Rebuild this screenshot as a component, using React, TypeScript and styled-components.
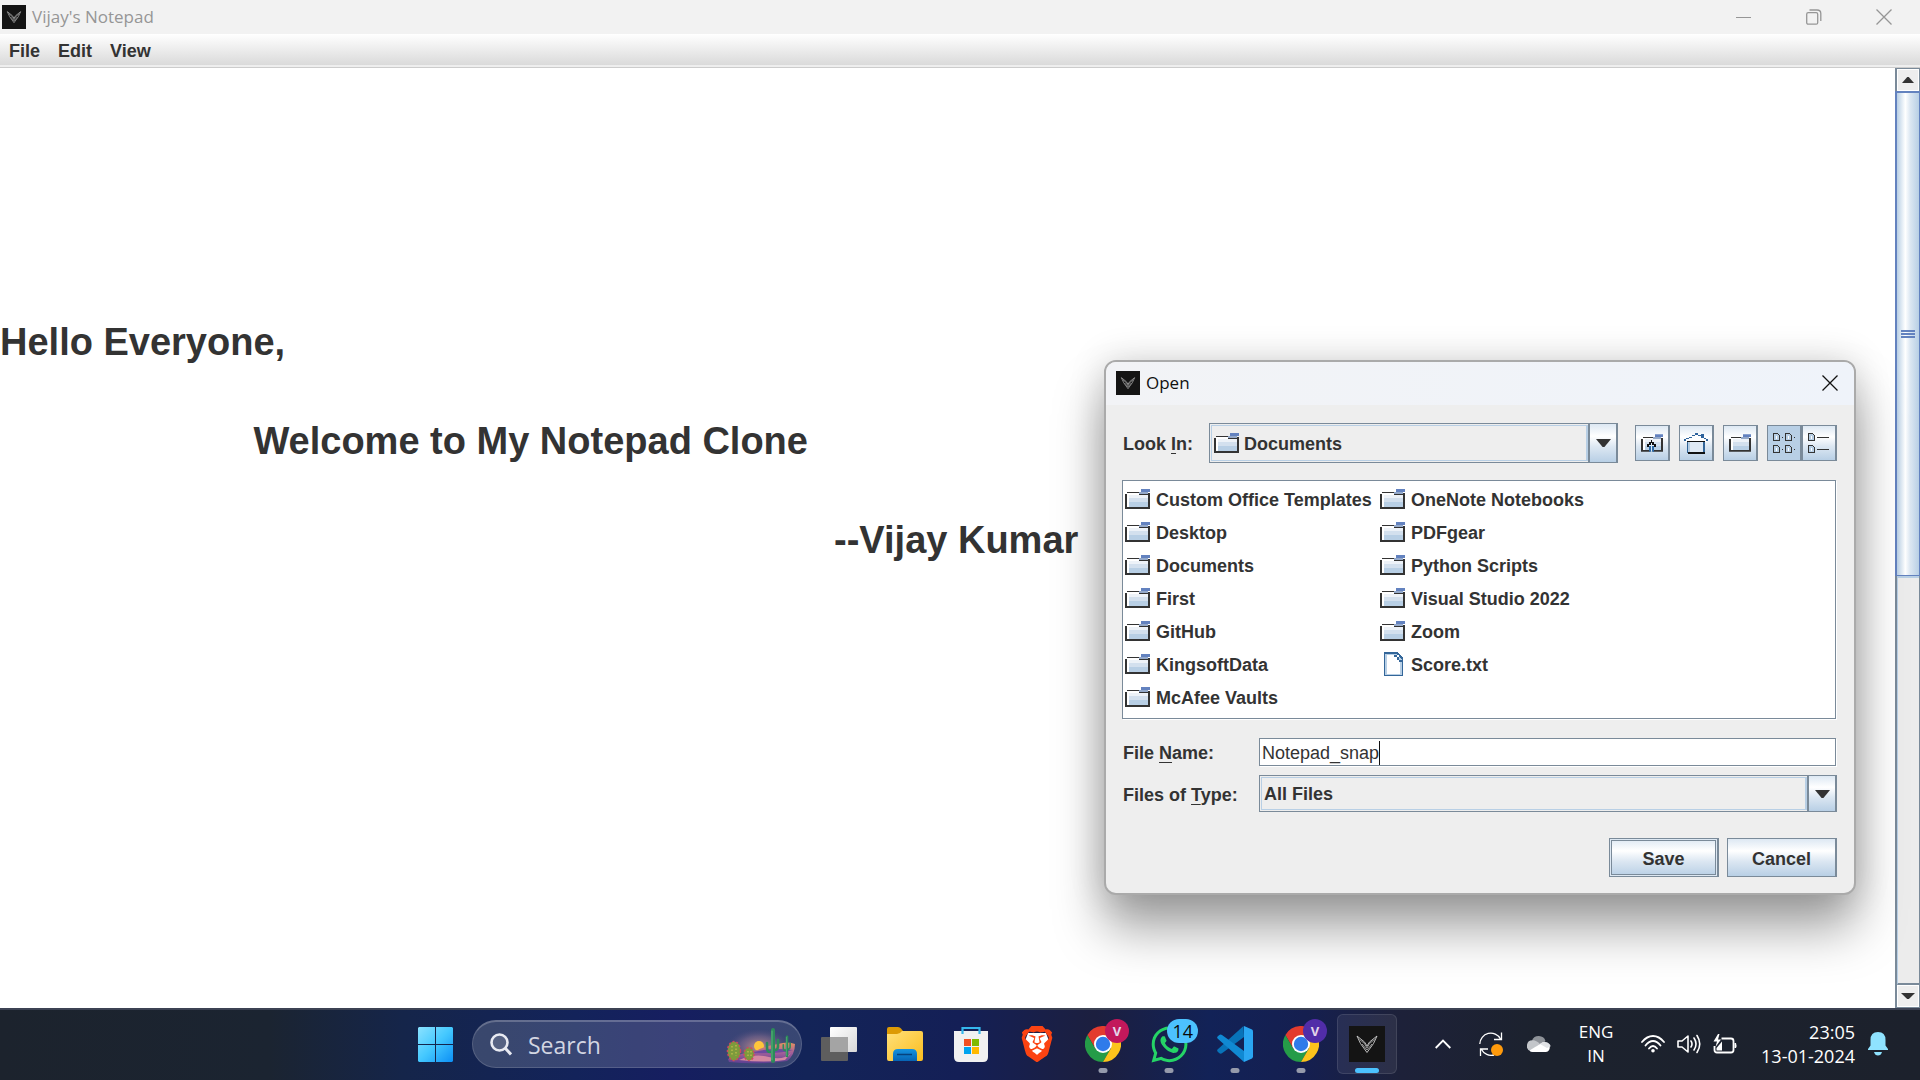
import React from "react";
import styled, { createGlobalStyle, css } from "styled-components";
import { FaWhatsapp } from "react-icons/fa";
import { SiBrave } from "react-icons/si";

const GlobalStyle = createGlobalStyle`
  *, *::before, *::after { box-sizing: border-box; }
  html, body, #root { height: 100%; }
  body {
    margin: 0;
    overflow: hidden;
    color: #333;
    font-family: "Liberation Sans", Arial, sans-serif;
    font-size: 18px;
  }
  button, input, select, textarea { font: inherit; color: inherit; }
  button { padding: 0; border: 0; background: none; }
  svg { display: block; flex: none; }
`;

const UI_FONT = `"Open Sans", "Noto Sans", sans-serif`;
const STEEL = "#7a8a99";
const SKY = "#b8cfe5";

const metal = css`
  background: linear-gradient(#dde8f3 0%, #ffffff 32%, #dce7f2 60%, ${SKY} 100%);
`;

/* ---------- page ---------- */

const Screen = styled.div`
  display: flex;
  flex-direction: column;
  height: 100vh;
  position: relative;
  background: #fff;
`;

const TitleBar = styled.header<{ $dialog?: boolean }>`
  display: flex;
  align-items: center;
  gap: 6px;
  flex: none;
  height: ${(p) => (p.$dialog ? 43 : 34)}px;
  padding: ${(p) => (p.$dialog ? "0 3px 2px 10px" : "0 1px 0 2px")};
  background: ${(p) => (p.$dialog ? "linear-gradient(90deg, #f2f3f6, #eff3fa)" : "#f2f2f2")};
  color: ${(p) => (p.$dialog ? "#111" : "#969696")};
`;

const TitleText = styled.h1`
  flex: 1;
  margin: 0;
  font: 400 17px/24px ${UI_FONT};
`;

const CaptionButtons = styled.div`
  display: flex;
`;

const CaptionButton = styled.button<{ $width: number }>`
  display: grid;
  place-items: center;
  width: ${(p) => p.$width}px;
  height: 32px;
`;

const MenuBar = styled.nav`
  display: flex;
  align-items: center;
  gap: 18px;
  flex: none;
  height: 34px;
  padding: 1px 9px 0;
  border-bottom: 1px solid #ccc;
  background: linear-gradient(#fff, #dadada 31px, #eee 31px);
`;

const MenuButton = styled.button`
  font-weight: 700;
`;

const Workspace = styled.main`
  display: flex;
  flex: 1;
  min-height: 0;
`;

const Editor = styled.textarea`
  flex: 1;
  min-width: 0;
  padding: 225px 0 0;
  border: 0;
  outline: 0;
  resize: none;
  overflow: hidden;
  white-space: pre;
  font-size: 38px;
  font-weight: 700;
  line-height: 99px;
`;

/* ---------- scroll bar ---------- */

const ScrollBar = styled.div`
  display: flex;
  flex-direction: column;
  width: 25px;
  border: solid ${STEEL};
  border-width: 1px 1px 1px 2px;
  background: #ececec;
`;

const ScrollArrow = styled.button`
  display: grid;
  place-items: center;
  height: 22px;
  border: 1px solid #fff;
  background: #eee;
`;

const ScrollThumb = styled.div`
  display: grid;
  place-items: center;
  flex: 485;
  margin-left: -2px;
  margin-right: -1px;
  border: 2px solid #6382bf;
  border-width: 2px 1px 1px 2px;
  background: linear-gradient(90deg, ${SKY}, #fff 38%, #dce7f2 60%, ${SKY});
`;

const ScrollTrack = styled.div`
  flex: 408;
  border-top: 2px solid ${SKY};
  border-bottom: 2px solid ${STEEL};
  border-left: 1px solid ${SKY};
`;

/* ---------- dialog ---------- */

const Dialog = styled.section`
  position: absolute;
  top: 360px;
  right: 64px;
  width: 752px;
  border: 2px solid #aaa;
  border-radius: 12px;
  overflow: hidden;
  background: #eee;
  background-clip: padding-box;
  box-shadow: 0 34px 50px rgba(0, 0, 0, 0.36), 0 0 36px rgba(0, 0, 0, 0.16);
`;

const DialogBody = styled.form`
  display: flex;
  flex-direction: column;
  padding: 18px 17px 16px 16px;
  font-weight: 700;
`;

const LookRow = styled.div`
  display: flex;
  align-items: center;
  margin-bottom: 17px;
`;

const Label = styled.label<{ $width: number }>`
  flex: none;
  width: ${(p) => p.$width}px;
  padding: 2px 0 0 1px;
  line-height: 24px;
`;

const Mnemonic = styled.span`
  text-decoration: underline;
  text-decoration-thickness: 1px;
  text-underline-offset: 3px;
`;

const ComboFrame = styled.div<{ $height: number }>`
  display: flex;
  flex: 1;
  height: ${(p) => p.$height}px;
  border: 1px solid ${STEEL};
`;

const ComboInner = styled.div`
  display: flex;
  align-items: center;
  flex: 1;
  gap: 5px;
  margin: 1px 0 1px 1px;
  padding-left: 2px;
  border: 1px solid ${SKY};
  border-right-width: 2px;
`;

const ComboSelect = styled.select`
  appearance: none;
  flex: 1;
  height: 100%;
  padding: 1px 0 0;
  border: 0;
  outline: 0;
  background: transparent;
  font-weight: 700;
`;

const ComboArrow = styled.span`
  display: grid;
  place-items: center;
  width: 29px;
  border: solid ${STEEL};
  border-width: 0 1px 0 2px;
  ${metal}
`;

const ToolGroup = styled.div`
  display: flex;
  gap: 9px;
  padding-left: 17px;
`;

const ViewToggle = styled.div`
  display: flex;
`;

const ToolButton = styled.button<{ $pressed?: boolean }>`
  display: grid;
  place-items: center;
  width: 35px;
  height: 36px;
  border: 1px solid ${STEEL};
  border-right-width: 2px;
  ${metal}
  ${(p) => p.$pressed && css`background: ${SKY};`}
`;

const FileList = styled.ul`
  display: grid;
  grid-auto-flow: column;
  grid-template-rows: repeat(7, 33px);
  grid-auto-columns: 255px;
  align-content: start;
  height: 239px;
  margin: 0 1px 19px 0;
  padding: 3px 2px;
  list-style: none;
  border: 1px solid ${STEEL};
  background: #fff;
  box-shadow: 1px 1px 0 #fff;
`;

const FileItem = styled.li`
  display: flex;
  align-items: center;
  gap: 6px;
  white-space: nowrap;

  svg { margin-bottom: 3px; }
`;

const FieldRow = styled.div<{ $after: number }>`
  display: flex;
  align-items: center;
  margin-bottom: ${(p) => p.$after}px;
`;

const TextField = styled.div`
  display: flex;
  flex: 1;
  height: 28px;
  margin-right: 1px;
  padding: 2px 2px 0;
  border: 1px solid ${STEEL};
  background: #fff;
  box-shadow: 1px 1px 0 #fff;
`;

const NameInput = styled.input`
  field-sizing: content;
  padding: 0;
  border: 0;
  outline: 0;
  background: transparent;
  font-weight: 400;
`;

const Caret = styled.span`
  width: 1px;
  background: #111;
`;

const Actions = styled.div`
  display: flex;
  justify-content: flex-end;
  gap: 8px;
`;

const PushButton = styled.button<{ $primary?: boolean }>`
  width: 110px;
  height: 39px;
  padding-top: 3px;
  border: 1px solid ${STEEL};
  border-right-width: 2px;
  font-weight: 700;
  ${metal}
  ${(p) =>
    p.$primary &&
    css`
      box-shadow: inset 0 0 0 1px #dde8f3, inset 0 0 0 2px ${STEEL};
    `}
`;

/* ---------- taskbar ---------- */

const TaskBar = styled.footer`
  display: flex;
  align-items: center;
  flex: none;
  height: 72px;
  padding-bottom: 2px;
  border-top: 2px solid #3c4253;
  background: linear-gradient(
    90deg,
    #1c232d 0%,
    #1b2431 14%,
    #15254a 21%,
    #13235a 30%,
    #161e60 35%,
    #132458 42%,
    #141f56 50%,
    #1c1f3f 57%,
    #122257 63%,
    #151f50 68%,
    #1d2139 73%,
    #1c222e 80%,
    #1c212c 100%
  );
  background-origin: border-box;
  color: #fff;
  font: 400 17px/24px ${UI_FONT};
`;

const Apps = styled.div`
  display: flex;
  align-items: center;
  gap: 6px;
  margin-left: auto;
`;

const AppButton = styled.button<{ $active?: boolean }>`
  display: grid;
  place-items: center;
  position: relative;
  width: 60px;
  height: 60px;
  border-radius: 6px;
  ${(p) =>
    p.$active &&
    css`
      border: 1px solid rgba(255, 255, 255, 0.1);
      background: rgba(255, 255, 255, 0.07);
    `}
`;

const RunMark = styled.span<{ $active?: boolean }>`
  position: absolute;
  bottom: ${(p) => (p.$active ? 0 : 1)}px;
  left: 50%;
  width: ${(p) => (p.$active ? 24 : 9)}px;
  height: 5px;
  border-radius: 3px;
  transform: translateX(-50%);
  background: ${(p) => (p.$active ? "#4cc2ff" : "#959aab")};
`;

const Badge = styled.span<{ $tone: string; $wide?: boolean }>`
  position: absolute;
  top: 5px;
  right: ${(p) => (p.$wide ? 1 : 4)}px;
  min-width: 24px;
  padding: 0 ${(p) => (p.$wide ? 5 : 0)}px;
  border-radius: 12px;
  background: ${(p) => p.$tone};
  color: ${(p) => (p.$wide ? "#0a0a0a" : "#e4d6ea")};
  font: ${(p) => (p.$wide ? "400 18px" : "700 13px")} / 24px ${UI_FONT};
  text-align: center;
`;

const SearchBox = styled.label`
  display: flex;
  align-items: center;
  gap: 16px;
  width: 330px;
  height: 48px;
  margin: 0 1px;
  padding: 0 4px 0 17px;
  border: 1px solid rgba(255, 255, 255, 0.14);
  border-top: 2px solid rgba(255, 255, 255, 0.22);
  border-radius: 24px;
  background: rgba(255, 255, 255, 0.16);
`;

const SearchInput = styled.input`
  flex: 1;
  min-width: 0;
  padding: 0;
  border: 0;
  outline: 0;
  background: transparent;
  font-size: 23px;
  &::placeholder { color: #d3d6e2; opacity: 1; }
`;

const Tray = styled.div`
  display: flex;
  align-items: center;
  height: 60px;
  padding: 0 19px 0 22px;
`;

const TrayButton = styled.button<{ $width?: number }>`
  display: grid;
  place-items: center;
  width: ${(p) => p.$width ?? 48}px;
  height: 60px;
`;

const Status = styled.button`
  display: flex;
  align-items: center;
  gap: 12px;
  height: 60px;
  padding: 0 12px;
`;

const Clock = styled.button`
  min-width: 106px;
  font-size: 18px;
  text-align: right;
`;

/* ---------- drawings ---------- */

const AppLogo = ({ size }: { size: number }) => (
  <svg width={size} height={size} viewBox="0 0 36 36">
    <rect width="36" height="36" fill="#141414" />
    <g fill="none" stroke="#d0d0d0" strokeWidth=".9" strokeLinejoin="round">
      <path d="M8 10l7.500 6L18 20l2.500-4L28 10l-3.500 7.500L18 26.500l-6.500-9z" />
      <path d="M10.500 13.500l5 4L18 22l2.500-4.500 5-4M13 18l5 6 5-6" stroke="#a8a8a8" />
    </g>
  </svg>
);

const Folder = ({ arrow = false }: { arrow?: boolean }) => (
  <svg width="25" height="20" viewBox="0 0 25 20" shapeRendering="crispEdges">
    <path d="M2 4h21v14H2z" fill="#fff" />
    <path d="M4 6h19v3H4z" fill="#edf2f8" />
    <path d="M4 9h19v4H4z" fill="#d3e0ee" />
    <path d="M4 13h19v5H4z" fill={SKY} />
    <path d="M0 5h2v13h23v2H0zM2 3h12v1H2zM14 5h9V4h2v16h-2V6h-9z" fill="#333" />
    <path d="M14 3h9v2h-9z" fill="#93a8c9" />
    <path d="M16 0h9v3h-9z" fill="#6382bf" />
    {arrow && (
      <>
        <path d="M7 13l5-5 5 5v1h-3v6h-4v-6H7z" fill="#dcebf8" />
        <path d="M9 13h2v7H9zM13 13h2v7h-2z" fill="#2f6aa5" />
        <path d="M11 7h2v2h2v2h2v3h-2v-2h-2v-2h-2v2H9v2H7v-3h2V9h2z" fill="#111" />
      </>
    )}
  </svg>
);

const SmallFolder = ({ arrow = false }: { arrow?: boolean }) => (
  <svg width="22" height="18" viewBox="0 0 25 20">
    <Folder arrow={arrow} />
  </svg>
);

const Sheet = () => (
  <svg width="25" height="24" viewBox="0 0 25 24" shapeRendering="crispEdges">
    <path d="M4 0h14l5 6v18H4z" fill="#336699" />
    <path d="M5 2h12l5 6v15H5z" fill={SKY} />
    <path d="M7 3h8l5 7v12H7z" fill="#fff" />
    <path d="M14 3h3v2h2v3h3v2h-3V8h-2V5h-3z" fill="#336699" />
    <path d="M17 3h2v2h-2z" fill="#fff" />
  </svg>
);

const Home = () => (
  <svg width="24" height="21" viewBox="0 0 24 21" shapeRendering="crispEdges">
    <path d="M12 1h1l10 6v2H1V7z" fill="#fff" />
    <path d="M11 0h3v2h-3zM8 2h3v1H8zM14 2h3v1h-3zM17 1h3v4h-3zM5 4h3v1H5zM2 5h3v1H2zM20 5h2v1h-2zM0 6h2v2H0zM22 6h2v2h-2z" fill="#2f639c" />
    <path d="M3 8h18v12H3z" fill="#336699" />
    <path d="M4 9h2v11H4z" fill={SKY} />
    <path d="M6 9h13v10H6z" fill="#dfe9f4" />
    <path d="M3 8h18v1H3zM4 19h17v2H4z" fill="#111" />
  </svg>
);

const Cell = ({ x, y }: { x: number; y: number }) => (
  <g>
    <path d={`M${x + 0.5} ${y + 0.5}h4l2 2v5h-6z`} fill="#b8cfe5" stroke="#333" />
    <path d={`M${x + 3} ${y + 3}h1v3h-1z`} fill="#fff" />
  </g>
);

const ListIcon = () => (
  <svg width="23" height="20" viewBox="0 0 23 20" shapeRendering="crispEdges">
    <Cell x={0} y={0} />
    <Cell x={12} y={0} />
    <Cell x={0} y={12} />
    <Cell x={12} y={12} />
    <path d="M9 4h1v1H9zM21 4h1v1h-1zM9 16h1v1H9zM21 16h1v1h-1z" fill="#333" />
  </svg>
);

const DetailsIcon = () => (
  <svg width="22" height="20" viewBox="0 0 22 20" shapeRendering="crispEdges">
    <Cell x={0} y={0} />
    <Cell x={0} y={12} />
    <path d="M9 4h12v1H9zM9 16h12v1H9z" fill="#333" />
  </svg>
);

const Triangle = ({ up = false, width = 15 }: { up?: boolean; width?: number }) => (
  <svg width={width} height={up || width < 15 ? 6 : 8} viewBox="0 0 16 8" preserveAspectRatio="none">
    <path d={up ? "M0 8h16L9 0H7z" : "M0 0h16L9 8H7z"} fill="#333" />
  </svg>
);

const Grip = () => (
  <svg width="14" height="8" viewBox="0 0 14 8" shapeRendering="crispEdges">
    <path d="M0 0h14v2H0zM0 3h14v2H0zM0 6h14v2H0z" fill="#6382bf" />
  </svg>
);

const Cross = () => (
  <svg width="16" height="16" viewBox="0 0 16 16" fill="none" stroke="currentColor" strokeWidth="1.300">
    <path d="M.5.5l15 15M15.500.5l-15 15" />
  </svg>
);

const WindowsLogo = () => (
  <svg width="35" height="35" viewBox="0 0 35 35">
    <defs>
      <linearGradient id="win" x1="0" y1="0" x2="1" y2="1" gradientUnits="objectBoundingBox">
        <stop offset="0" stopColor="#8be2ff" />
        <stop offset=".5" stopColor="#44c8ff" />
        <stop offset="1" stopColor="#0c8ff5" />
      </linearGradient>
    </defs>
    <path d="M1 0h16v17H0V1zM18 0h16l1 1v16H18zM0 18h17v17H1l-1-1zM18 18h17v16l-1 1H18z" fill="url(#win)" />
  </svg>
);

const Magnifier = () => (
  <svg width="22" height="23" viewBox="0 0 22 23" fill="none" stroke="#e8eaf2" strokeWidth="2.600">
    <circle cx="9.500" cy="9.500" r="8" fill="rgba(255,255,255,.15)" />
    <path d="M15.500 15.500l5.500 6" strokeWidth="3" />
  </svg>
);

const Cactus = ({ x, y, s }: { x: number; y: number; s: number }) => (
  <g transform={`translate(${x} ${y}) scale(${s})`} fill="none" stroke="#2c8a5a" strokeLinecap="round" strokeLinejoin="round">
    <path d="M0 0v-31" strokeWidth="4" />
    <path d="M0-9h-3q-3 0-3-4v-5M0-11h2q3 0 3-4v-6" strokeWidth="2.600" />
    <path d="M-1-1v-29" stroke="#5cb27c" strokeWidth="1" />
  </g>
);

const Desert = () => (
  <svg width="72" height="38" viewBox="0 0 72 38">
    <defs>
      <radialGradient id="dusk">
        <stop offset="0" stopColor="#d79a8c" stopOpacity=".9" />
        <stop offset=".6" stopColor="#8d6f8f" stopOpacity=".5" />
        <stop offset="1" stopColor="#5a5080" stopOpacity="0" />
      </radialGradient>
      <linearGradient id="sand" x1="0" y1="0" x2="0" y2="1">
        <stop offset="0" stopColor="#e8935f" />
        <stop offset=".5" stopColor="#a35f9a" />
        <stop offset="1" stopColor="#5c3f92" />
      </linearGradient>
    </defs>
    <ellipse cx="34" cy="21" rx="32" ry="18" fill="url(#dusk)" />
    <circle cx="34" cy="20" r="5" fill="#ffc53a" />
    <path d="M3 33q12-6 26-7 10-6 24-8 10-3 17 0 0 11-8 17-30 4-58 1z" fill="url(#sand)" />
    <path d="M14 34q16-7 30-3t22-4l-6 7q-20 3-46 0z" fill="#d488a2" />
    <path d="M26 27q18-6 42-3-14 4-42 3z" fill="#6c4aa0" />
    <ellipse cx="9" cy="25" rx="6.500" ry="9.500" fill="#7d9a3c" stroke="#cf4a5c" strokeDasharray="2 2" strokeWidth="1.500" />
    <ellipse cx="24" cy="28" rx="5" ry="6.500" fill="#7d9a3c" stroke="#cf4a5c" strokeDasharray="2 2" strokeWidth="1.500" />
    <path d="M7 20v10M11 19v11M23 25v7M26 25v6" stroke="#c8c04c" strokeDasharray="1.500 2" strokeWidth="1.200" />
    <Cactus x={48} y={35} s={1} />
    <Cactus x={62} y={30} s={0.62} />
  </svg>
);

const TaskView = () => (
  <svg width="36" height="34" viewBox="0 0 36 34">
    <defs>
      <linearGradient id="tv" x1="0" y1="0" x2="1" y2="1">
        <stop offset="0" stopColor="#fff" />
        <stop offset="1" stopColor="#d8d8d8" />
      </linearGradient>
    </defs>
    <rect y="10" width="27" height="24" rx="1" fill="#5e5e5e" />
    <rect x="9" width="27" height="25" rx="1" fill="url(#tv)" />
    <path d="M9 10h18v15H9z" fill="#a4a4a4" />
  </svg>
);

const Explorer = () => (
  <svg width="36" height="34" viewBox="0 0 36 34">
    <defs>
      <linearGradient id="fe" x1="0" y1="0" x2="1" y2="1">
        <stop offset="0" stopColor="#ffe07a" />
        <stop offset="1" stopColor="#fbbd1e" />
      </linearGradient>
      <linearGradient id="fb" x1="0" y1="0" x2="0" y2="1">
        <stop offset="0" stopColor="#1593e0" />
        <stop offset="1" stopColor="#0764b4" />
      </linearGradient>
    </defs>
    <path d="M0 2q0-2 2-2h9q2 0 3 1.500L16 4v6H0z" fill="#dc9a05" />
    <path d="M0 7h10q3 0 5-3h19q2 0 2 2v26q0 2-2 2H2q-2 0-2-2z" fill="url(#fe)" />
    <path d="M6 34v-7q0-5 5-5h14q5 0 5 5v7z" fill="url(#fb)" />
    <path d="M10 27.500h15" stroke="#06427d" strokeWidth="1.500" />
  </svg>
);

const Store = () => (
  <svg width="36" height="36" viewBox="0 0 36 36">
    <path d="M9.500 7V2h17v5" fill="none" stroke="#35b7ec" strokeWidth="2.200" />
    <path d="M1 5h34v26q0 5-5 5H6q-5 0-5-5z" fill="#f1f1f1" />
    <path d="M9.500 5v3M26.500 5v3" stroke="#35b7ec" strokeWidth="2.200" />
    <path d="M11 13h7v7h-7z" fill="#f25022" />
    <path d="M19 13h7v7h-7z" fill="#7fba00" />
    <path d="M11 21h7v7h-7z" fill="#00a4ef" />
    <path d="M19 21h7v7h-7z" fill="#ffb900" />
  </svg>
);

const Brave = () => (
  <svg width="36" height="36" viewBox="0 0 36 36">
    <path d="M9 7h18l3 8-5 11-7 5-7-5-5-11z" fill="#fff" />
    <SiBrave size={36} color="#fb4312" />
  </svg>
);

const Chrome = () => (
  <svg width="36" height="36" viewBox="0 0 36 36">
    <path d="M2.400 9A18 18 0 0 1 33.600 9H18l-7.800 13.500z" fill="#e33b2e" />
    <path d="M2.400 9l7.800 13.500L18 26l7.800-3.500L18 36A18 18 0 0 1 2.400 9z" fill="#259c48" />
    <path d="M33.600 9A18 18 0 0 1 18 36l7.800-13.500L18 9z" fill="#fcc31c" />
    <circle cx="18" cy="18" r="9" fill="#fff" />
    <circle cx="18" cy="18" r="7.200" fill="#2f7bea" />
  </svg>
);

const VsCode = () => (
  <svg width="36" height="36" viewBox="0 0 36 36">
    <path d="M26.500 0L27 11 5 27.300q-1.500 1-3-.3L.6 25.500q-1-1.200.2-2.300z" fill="#0873b9" />
    <path d="M.8 12.800Q-.4 11.700.6 10.500L2 9.200q1.500-1.300 3-.2L27 25v11z" fill="#1089d3" />
    <path d="M27 0l8 3.600q1 .6 1 1.800v25.200q0 1.200-1 1.800L27 36z" fill="#2aa6f2" />
  </svg>
);

const SyncIcon = () => (
  <svg width="24" height="24" viewBox="0 0 24 24" fill="none" stroke="#fff" strokeWidth="1.300">
    <path d="M.8 12A11 11 0 0 1 21.500 7M22.500.5V7.500H15M15 23A11 11 0 0 1 2.500 17.500M1.500 24v-7H9" />
    <circle cx="18" cy="18" r="6" fill="#ff9a0c" stroke="none" />
  </svg>
);

const Cloud = () => (
  <svg width="24" height="16" viewBox="0 0 24 16">
    <path d="M5 4.500A7.200 7.200 0 0 1 18.500 5L13 11z" fill="#8e9298" />
    <path d="M5.500 4.300Q9 4 13 8l-9 7.300a5.600 5.600 0 0 1 1.500-11z" fill="#c3c6ca" />
    <path d="M13 8q3-2.500 5.500-1.800A5 5 0 0 1 19 16H5.500q-2 0-3-1.500z" fill="#fff" />
    <path d="M13 8q3-2.500 5.500-1.800 4 .3 5.200 4L20 12z" fill="#e0e2e5" />
  </svg>
);

const Wifi = () => (
  <svg width="24" height="18" viewBox="0 0 24 18" fill="none" stroke="#fff" strokeWidth="1.800" strokeLinecap="round">
    <path d="M1 7Q6 1 12 1t11 6M4.500 10.500Q8 6 12 6t7.500 4.500M8 13.500Q10 11 12 11t4 2.500" />
    <circle cx="12" cy="15.800" r="1.800" fill="#fff" stroke="none" />
  </svg>
);

const Speaker = () => (
  <svg width="24" height="20" viewBox="0 0 24 20" fill="none" stroke="#fff" strokeWidth="1.600" strokeLinecap="round" strokeLinejoin="round">
    <path d="M1 7v6h4l6 5V2L5 7z" />
    <path d="M14 7q2 3 0 6M17 4q4 6 0 12M20 1.500q5.500 8.500 0 17" />
  </svg>
);

const Battery = () => (
  <svg width="24" height="20" viewBox="0 0 24 20">
    <path d="M8.500 4.500H18q2.500 0 2.500 2.500v9q0 2.500-2.500 2.500H4q-2.500 0-2.500-2.500v-4" fill="none" stroke="#fff" strokeWidth="1.800" />
    <path d="M21.500 9H23q1 2.500 0 5h-1.500z" fill="#fff" />
    <path d="M3.500 16.500V14L9 7.500v9z" fill="#fff" />
    <path d="M5 0L.5 7.500H4L2.500 13 8 5.500H5L6.500 0z" fill="#fff" />
  </svg>
);

const Bell = () => (
  <svg width="20" height="24" viewBox="0 0 20 24" fill="#8fe3ff">
    <path d="M10 0q7.500 0 7.500 8v5.500l2.500 3.500v1H0v-1l2.500-3.500V8Q2.500 0 10 0zM6 20h8q-1 3.500-4 3.500T6 20z" />
  </svg>
);

/* ---------- content ---------- */

const NOTE = [
  "Hello Everyone,",
  " ".repeat(24) + "Welcome to My Notepad Clone",
  " ".repeat(79) + "--Vijay Kumar",
].join("\n");

const FILES = [
  "Custom Office Templates",
  "Desktop",
  "Documents",
  "First",
  "GitHub",
  "KingsoftData",
  "McAfee Vaults",
  "OneNote Notebooks",
  "PDFgear",
  "Python Scripts",
  "Visual Studio 2022",
  "Zoom",
  "Score.txt",
];

const OpenDialog = () => (
  <Dialog role="dialog" aria-label="Open">
    <TitleBar $dialog>
      <AppLogo size={24} />
      <TitleText as="h2">Open</TitleText>
      <CaptionButton type="button" $width={42} aria-label="Close dialog">
        <Cross />
      </CaptionButton>
    </TitleBar>
    <DialogBody onSubmit={(e) => e.preventDefault()}>
      <LookRow>
        <Label $width={87} htmlFor="look-in">
          Look <Mnemonic>I</Mnemonic>n:
        </Label>
        <ComboFrame $height={40}>
          <ComboInner>
            <Folder />
            <ComboSelect id="look-in">
              <option>Documents</option>
            </ComboSelect>
          </ComboInner>
          <ComboArrow>
            <Triangle />
          </ComboArrow>
        </ComboFrame>
        <ToolGroup>
          <ToolButton type="button" aria-label="Up one level"><SmallFolder arrow /></ToolButton>
          <ToolButton type="button" aria-label="Home"><Home /></ToolButton>
          <ToolButton type="button" aria-label="Create new folder"><SmallFolder /></ToolButton>
          <ViewToggle>
            <ToolButton type="button" $pressed aria-label="List"><ListIcon /></ToolButton>
            <ToolButton type="button" aria-label="Details"><DetailsIcon /></ToolButton>
          </ViewToggle>
        </ToolGroup>
      </LookRow>
      <FileList>
        {FILES.map((name) => (
          <FileItem key={name}>
            {name.endsWith(".txt") ? <Sheet /> : <Folder />}
            {name}
          </FileItem>
        ))}
      </FileList>
      <FieldRow $after={9}>
        <Label $width={137} htmlFor="file-name">
          File <Mnemonic>N</Mnemonic>ame:
        </Label>
        <TextField>
          <NameInput id="file-name" defaultValue="Notepad_snap" />
          <Caret />
        </TextField>
      </FieldRow>
      <FieldRow $after={26}>
        <Label $width={137} htmlFor="file-type">
          Files of <Mnemonic>T</Mnemonic>ype:
        </Label>
        <ComboFrame $height={37}>
          <ComboInner>
            <ComboSelect id="file-type">
              <option>All Files</option>
            </ComboSelect>
          </ComboInner>
          <ComboArrow>
            <Triangle />
          </ComboArrow>
        </ComboFrame>
      </FieldRow>
      <Actions>
        <PushButton type="submit" $primary>Save</PushButton>
        <PushButton type="button">Cancel</PushButton>
      </Actions>
    </DialogBody>
  </Dialog>
);

export default function App() {
  return (
    <Screen>
      <GlobalStyle />
      <TitleBar>
        <AppLogo size={24} />
        <TitleText>Vijay's Notepad</TitleText>
        <CaptionButtons>
          <CaptionButton $width={70} aria-label="Minimize">
            <svg width="16" height="16" viewBox="0 0 16 16"><path d="M0 8.500h15" stroke="currentColor" /></svg>
          </CaptionButton>
          <CaptionButton $width={70} aria-label="Restore">
            <svg width="16" height="16" viewBox="0 0 16 16" fill="none" stroke="currentColor" strokeWidth="1.300">
              <rect x=".7" y="3.700" width="11" height="11.500" rx="1.500" />
              <path d="M3.500 1H11q3.800 0 3.800 3.500V12" />
            </svg>
          </CaptionButton>
          <CaptionButton $width={70} aria-label="Close">
            <Cross />
          </CaptionButton>
        </CaptionButtons>
      </TitleBar>
      <MenuBar>
        <MenuButton>File</MenuButton>
        <MenuButton>Edit</MenuButton>
        <MenuButton>View</MenuButton>
      </MenuBar>
      <Workspace>
        <Editor aria-label="Note text" defaultValue={NOTE} spellCheck={false} />
        <ScrollBar>
          <ScrollArrow aria-label="Scroll up"><Triangle up width={12} /></ScrollArrow>
          <ScrollThumb><Grip /></ScrollThumb>
          <ScrollTrack />
          <ScrollArrow aria-label="Scroll down"><Triangle width={14} /></ScrollArrow>
        </ScrollBar>
      </Workspace>
      <TaskBar>
        <Apps>
          <AppButton aria-label="Start"><WindowsLogo /></AppButton>
          <SearchBox>
            <Magnifier />
            <SearchInput placeholder="Search" aria-label="Search" />
            <Desert />
          </SearchBox>
          <AppButton aria-label="Task view"><TaskView /></AppButton>
          <AppButton aria-label="File Explorer"><Explorer /></AppButton>
          <AppButton aria-label="Store"><Store /></AppButton>
          <AppButton aria-label="Brave"><Brave /></AppButton>
          <AppButton aria-label="Chrome">
            <Chrome />
            <Badge $tone="#c2185b">V</Badge>
            <RunMark />
          </AppButton>
          <AppButton aria-label="WhatsApp">
            <FaWhatsapp size={41} color="#25d366" />
            <Badge $tone="#4cc2ff" $wide>14</Badge>
            <RunMark />
          </AppButton>
          <AppButton aria-label="Visual Studio Code">
            <VsCode />
            <RunMark />
          </AppButton>
          <AppButton aria-label="Chrome, second profile">
            <Chrome />
            <Badge $tone="#512da8">V</Badge>
            <RunMark />
          </AppButton>
          <AppButton $active aria-label="Vijay's Notepad">
            <AppLogo size={36} />
            <RunMark $active />
          </AppButton>
        </Apps>
        <Tray>
          <TrayButton aria-label="Show hidden icons">
            <svg width="16" height="10" viewBox="0 0 16 10" fill="none" stroke="#fff" strokeWidth="1.800"><path d="M.7 9L8 1.500 15.300 9" /></svg>
          </TrayButton>
          <TrayButton aria-label="Updates"><SyncIcon /></TrayButton>
          <TrayButton aria-label="OneDrive"><Cloud /></TrayButton>
          <TrayButton $width={66}>
            <span>ENG<br />IN</span>
          </TrayButton>
          <Status aria-label="Network, sound, battery">
            <Wifi />
            <Speaker />
            <Battery />
          </Status>
          <Clock>23:05<br />13-01-2024</Clock>
          <TrayButton $width={46} aria-label="Notifications"><Bell /></TrayButton>
        </Tray>
      </TaskBar>
      <OpenDialog />
    </Screen>
  );
}
